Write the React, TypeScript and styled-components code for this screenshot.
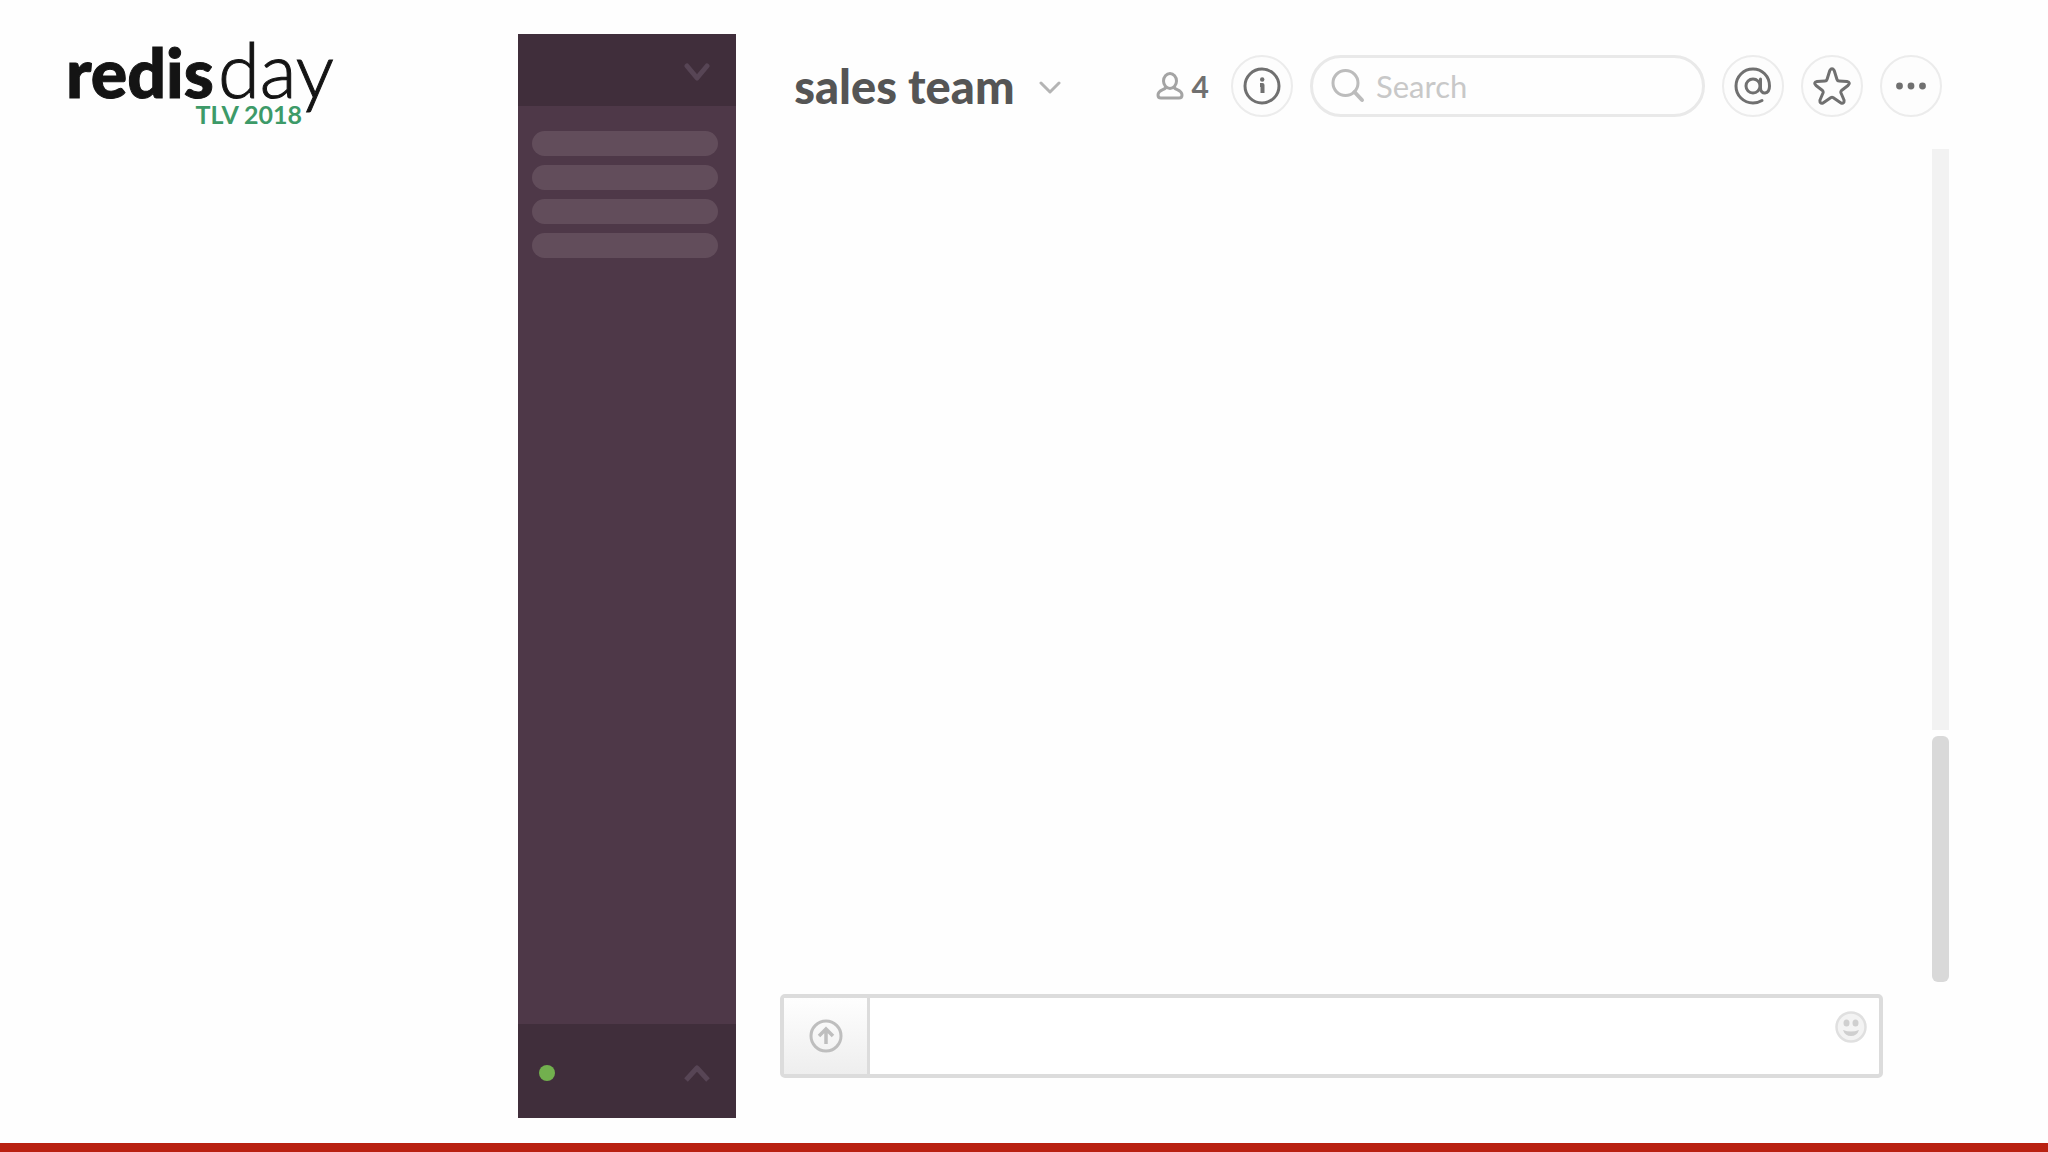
import React from "react";
import styled, { createGlobalStyle } from "styled-components";

const GlobalStyle = createGlobalStyle`
  *, *::before, *::after { box-sizing: border-box; }
  body { margin: 0; background: #fefefe; font-family: Lato, "Liberation Sans", sans-serif; }
  button, input { font: inherit; margin: 0; }
`;

const Slide = styled.div`
  min-height: 100vh;
  display: flex;
  flex-direction: column;
`;

const Stage = styled.div`
  flex: 1;
  display: grid;
  grid-template-columns: 25.3% 218px minmax(0, 1fr);
  padding: 34px 0 25px;
`;

const BottomRule = styled.footer`
  height: 9px;
  background: #b92111;
`;

const Brand = styled.div`
  padding-left: 66px;
`;

const Lockup = styled.div`
  display: inline-flex;
  flex-direction: column;
`;

const Wordmark = styled.div`
  height: 67px;
  font-size: 76px;
  line-height: 70px;
  color: #141414;
  white-space: nowrap;
`;

const Heavy = styled.span`
  font-size: 68px;
  font-weight: 900;
  -webkit-text-stroke: 1px #141414;
`;

const Thin = styled.span`
  margin-left: 4px;
  font-weight: 300;
  -webkit-text-stroke: 1px #141414;
`;

const Edition = styled.div`
  padding-right: 32px;
  text-align: right;
  font-size: 25px;
  line-height: 26px;
  font-weight: 700;
  color: #3d9a68;
`;

const Sidebar = styled.aside`
  display: flex;
  flex-direction: column;
  background: #4e3848;
`;

const SidebarBar = styled.div<{ $height: number; $justify: string }>`
  height: ${(p) => p.$height}px;
  padding: 4px 26px 0 21px;
  display: flex;
  align-items: center;
  justify-content: ${(p) => p.$justify};
  background: #402e3b;
  color: #574555;
`;

const PlainButton = styled.button`
  display: flex;
  padding: 0;
  border: 0;
  background: none;
  color: inherit;
`;

const ChannelList = styled.ul`
  flex: 1;
  margin: 0;
  padding: 25px 18px 0 14px;
  list-style: none;
  display: flex;
  flex-direction: column;
  gap: 9px;
`;

const ChannelPill = styled.li`
  height: 25px;
  border-radius: 13px;
  background: #624d5b;
`;

const Presence = styled.span`
  width: 16px;
  height: 16px;
  border-radius: 50%;
  background: #72b04e;
`;

const Chat = styled.main`
  display: flex;
  flex-direction: column;
  padding: 21px 99px 40px 44px;
`;

const Header = styled.header`
  display: flex;
  align-items: center;
  gap: 17px;
  height: 62px;
  padding: 0 7px 0 14px;
`;

const TitleGroup = styled.div`
  flex: 1;
  display: flex;
  align-items: center;
  gap: 24px;
  color: #b4b4b4;
`;

const Title = styled.h1`
  margin: 0;
  font-size: 47px;
  line-height: 60px;
  font-weight: 900;
  color: #555555;
  white-space: nowrap;
`;

const Members = styled.div`
  display: flex;
  align-items: center;
  gap: 8px;
  padding-right: 5px;
  font-size: 30px;
  line-height: 36px;
  font-weight: 700;
  color: #707070;
`;

const RoundButton = styled.button`
  flex: none;
  width: 62px;
  height: 62px;
  padding: 0;
  display: flex;
  align-items: center;
  justify-content: center;
  border: 2px solid #ececec;
  border-radius: 50%;
  background: #fdfdfd;
  color: #707070;
`;

const SearchBox = styled.label`
  width: 395px;
  height: 62px;
  padding: 0 18px;
  display: flex;
  align-items: center;
  gap: 10px;
  border: 3px solid #e9e9e9;
  border-radius: 31px;
  background: #fefefe;
  color: #bcbcbc;
`;

const SearchInput = styled.input`
  flex: 1;
  min-width: 0;
  padding: 0;
  border: 0;
  outline: 0;
  background: none;
  font-size: 31px;
  line-height: 36px;
  color: #555555;
  &::placeholder { color: #c8c8c8; opacity: 1; }
`;

const Messages = styled.section`
  flex: 1;
  display: flex;
  justify-content: flex-end;
  padding: 32px 0 12px;
`;

const Scroller = styled.div`
  width: 17px;
  display: flex;
  flex-direction: column;
  gap: 6px;
`;

const Track = styled.div`
  flex: 581;
  background: #f2f2f2;
`;

const Thumb = styled.div`
  flex: 246;
  border-radius: 6px;
  background: #d9d9d9;
`;

const Composer = styled.form`
  display: flex;
  height: 84px;
  margin-right: 66px;
  border: 4px solid #dcdcdc;
  border-radius: 5px;
  background: #ffffff;
`;

const UploadButton = styled.button`
  width: 86px;
  padding: 0;
  display: flex;
  align-items: center;
  justify-content: center;
  border: 0;
  border-right: 3px solid #dcdcdc;
  background: linear-gradient(#fefefe, #eeeeee);
  color: #bebebe;
`;

const MessageInput = styled.input`
  flex: 1;
  min-width: 0;
  padding: 0 20px;
  border: 0;
  outline: 0;
  background: none;
  font-size: 30px;
`;

const EmojiButton = styled(PlainButton)`
  align-self: flex-start;
  padding: 13px 12px 0 0;
  color: #e0e0e0;
`;

const Svg = ({ w, h, children }: { w: number; h: number; children: React.ReactNode }) => (
  <svg width={w} height={h} viewBox={`0 0 ${w} ${h}`} fill="none" stroke="currentColor"
    strokeWidth="3" strokeLinecap="round" strokeLinejoin="round" aria-hidden="true">
    {children}
  </svg>
);

export default function App() {
  return (
    <>
      <GlobalStyle />
      <Slide>
        <Stage>
          <Brand>
            <Lockup>
              <Wordmark><Heavy>redis</Heavy><Thin>day</Thin></Wordmark>
              <Edition>TLV 2018</Edition>
            </Lockup>
          </Brand>

          <Sidebar>
            <SidebarBar $height={72} $justify="flex-end">
              <PlainButton aria-label="Team menu">
                <Svg w={26} h={20}><path d="M3 4 L13 16 L23 4" strokeWidth="5" /></Svg>
              </PlainButton>
            </SidebarBar>
            <ChannelList>
              <ChannelPill /><ChannelPill /><ChannelPill /><ChannelPill />
            </ChannelList>
            <SidebarBar $height={94} $justify="space-between">
              <Presence />
              <PlainButton aria-label="Account menu">
                <Svg w={26} h={20}><path d="M2 17 L13 5 L24 17" strokeWidth="5" strokeLinecap="butt" /></Svg>
              </PlainButton>
            </SidebarBar>
          </Sidebar>

          <Chat>
            <Header>
              <TitleGroup>
                <Title>sales team</Title>
                <PlainButton aria-label="Channel menu">
                  <Svg w={22} h={18}><path d="M2 6 L11 15 L20 6" /></Svg>
                </PlainButton>
              </TitleGroup>
              <Members>
                <Svg w={28} h={28}>
                  <g stroke="#a4a4a4">
                    <ellipse cx="14" cy="9" rx="6.5" ry="7.5" />
                    <path d="M9.5 16 C8 18 2 18 2 23 C2 25.5 3 26 5 26 H23 C25 26 26 25.5 26 23 C26 18 20 18 18.5 16" />
                  </g>
                </Svg>
                4
              </Members>
              <RoundButton aria-label="Channel details">
                <Svg w={38} h={38}>
                  <circle cx="19" cy="19" r="17" />
                  <path d="M17 18 H19.5 V26" strokeWidth="4" strokeLinecap="butt" />
                  <circle cx="19.2" cy="12.5" r="2.2" fill="currentColor" stroke="none" />
                </Svg>
              </RoundButton>
              <SearchBox>
                <Svg w={35} h={35}>
                  <circle cx="14.500" cy="14" r="12.500" />
                  <path d="M23.500 23 L31 31" strokeWidth="4" />
                </Svg>
                <SearchInput type="search" placeholder="Search" aria-label="Search" />
              </SearchBox>
              <RoundButton aria-label="Mentions">
                <Svg w={38} h={38}>
                  <circle cx="19" cy="19" r="7" />
                  <path d="M26.5 12 V21 C26.5 28 35.500 28 35.500 19 C35.500 9 28 2 19 2 C9.500 2 2 9.500 2 19 C2 28.500 9.500 36 19 36 C22.500 36 25.500 35 28 33.500" />
                </Svg>
              </RoundButton>
              <RoundButton aria-label="Starred items">
                <Svg w={38} h={38}>
                  <path d="M16.800 3.500 Q19 0 21.200 3.500 L24 12.500 Q24.500 14 26 14 L34 14.500 Q38 15.500 35 18.500 L28.500 23.500 Q27.500 24.500 28 26 L31 33 Q31.500 37 28 36 L20 30.500 Q19 30 18 30.500 L10 36 Q6.500 37 7 33 L10 26 Q10.500 24.500 9.500 23.500 L3 18.500 Q0 15.500 4 14.500 L12 14 Q13.500 14 14 12.500 Z" />
                </Svg>
              </RoundButton>
              <RoundButton aria-label="More">
                <Svg w={32} h={8}>
                  <g fill="currentColor" stroke="none">
                    <circle cx="4.500" cy="4" r="3.400" />
                    <circle cx="16" cy="4" r="3.400" />
                    <circle cx="27.500" cy="4" r="3.400" />
                  </g>
                </Svg>
              </RoundButton>
            </Header>

            <Messages aria-label="Messages">
              <Scroller>
                <Track />
                <Thumb />
              </Scroller>
            </Messages>

            <Composer onSubmit={(e) => e.preventDefault()}>
              <UploadButton type="button" aria-label="Upload a file">
                <Svg w={34} h={34}>
                  <circle cx="17" cy="17" r="15" />
                  <path d="M17 25 V11 M10 17 L17 10 L24 17" strokeLinecap="butt" strokeLinejoin="miter" strokeWidth="3.500" />
                </Svg>
              </UploadButton>
              <MessageInput type="text" aria-label="Message sales team" />
              <EmojiButton type="button" aria-label="Insert emoji">
                <Svg w={32} h={32}>
                  <circle cx="16" cy="16" r="14.500" fill="#f3f3f3" strokeWidth="2.500" />
                  <g fill="#cfcfcf" stroke="none">
                    <ellipse cx="11.500" cy="12" rx="3" ry="3.500" />
                    <ellipse cx="20.500" cy="12" rx="3" ry="3.500" />
                    <path d="M8 19 Q16 22 24 19 Q22 25 16 25 Q10 25 8 19 Z" />
                  </g>
                </Svg>
              </EmojiButton>
            </Composer>
          </Chat>
        </Stage>
        <BottomRule />
      </Slide>
    </>
  );
}
